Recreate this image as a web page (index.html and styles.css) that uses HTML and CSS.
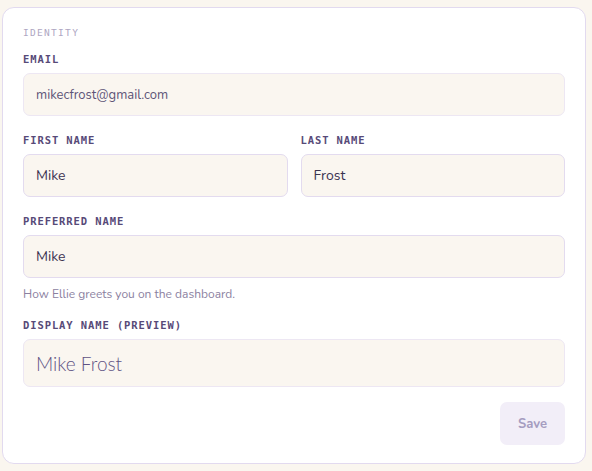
FILE: index.html
```html
<!DOCTYPE html>
<html lang="en">
<head>
    <meta charset="UTF-8">
    <title>Identity</title>
    <link rel="stylesheet" href="styles.css">
</head>
<body>

<div class="card">
  <div class="section-title">Identity</div>

  <div class="field">
    <label class="label" for="email">Email</label>
    <input class="input readonly" id="email" type="text" value="mikecfrost@gmail.com" readonly />
  </div>

  <div class="row">
    <div class="field">
      <label class="label" for="first">First name</label>
      <input class="input" id="first" type="text" value="Mike" />
    </div>
    <div class="field">
      <label class="label" for="last">Last name</label>
      <input class="input" id="last" type="text" value="Frost" />
    </div>
  </div>

  <div class="field">
    <label class="label" for="preferred">Preferred name</label>
    <input class="input" id="preferred" type="text" value="Mike" />
    <div class="hint">How Ellie greets you on the dashboard.</div>
  </div>

  <div class="field">
    <div class="label">Display name (preview)</div>
    <div class="preview">Mike Frost</div>
  </div>

  <div class="actions">
    <button class="save" disabled>Save</button>
  </div>
</div>

</body>
</html>
```

FILE: styles.css
```css
body {
	margin: 0;
	padding: 7px 6px 0 2px;
	background: #faf6ef;
	font-family: "Nunito", Lato, "Open Sans", sans-serif;
}
.card {
	background: #fff;
	border: 1px solid #e2daef;
	border-radius: 12px;
	padding: 18px 20px 18px 20px;
}
.section-title {
	font-family: "DejaVu Sans Mono", monospace;
	font-size: 9.5px;
	line-height: 14px;
	letter-spacing: 1.3px;
	text-transform: uppercase;
	color: #aea6c2;
	margin-bottom: 12px;
}
.field {
	display: flex;
	flex-direction: column;
	margin-bottom: 17px;
}
.label {
	font-family: "DejaVu Sans Mono", monospace;
	font-weight: bold;
	font-size: 10.5px;
	line-height: 14px;
	letter-spacing: 0.9px;
	text-transform: uppercase;
	color: #574a78;
	margin-bottom: 7px;
}
.row {
	display: grid;
	grid-template-columns: 1fr 1fr;
	gap: 13px;
}
.input {
	box-sizing: border-box;
	height: 43px;
	width: 100%;
	padding: 0 12px;
	background: #faf6f0;
	border: 1px solid #e3dbef;
	border-radius: 7px;
	font-family: inherit;
	font-size: 14px;
	color: #3a3350;
	outline: none;
}
.input.readonly {
	font-size: 13px;
	color: #5d5477;
	border-color: #ede7f3;
}
.hint {
	margin-top: 8px;
	font-size: 12px;
	line-height: 16px;
	color: #8b819f;
}
.field:has(.hint) {
	margin-bottom: 16px;
}
.preview {
	box-sizing: border-box;
	height: 48px;
	display: flex;
	align-items: center;
	padding: 0 12px;
	background: #faf6f0;
	border: 1px solid #ede7f3;
	border-radius: 7px;
	font-family: Lato, sans-serif;
	font-weight: 300;
	font-size: 19px;
	color: #605384;
}
.actions {
	display: flex;
	justify-content: flex-end;
	margin-top: -2px;
}
.save {
	height: 43px;
	width: 65px;
	border: none;
	border-radius: 7px;
	background: #f2eef8;
	color: #a59cc0;
	font-family: inherit;
	font-weight: bold;
	font-size: 13px;
}
```
